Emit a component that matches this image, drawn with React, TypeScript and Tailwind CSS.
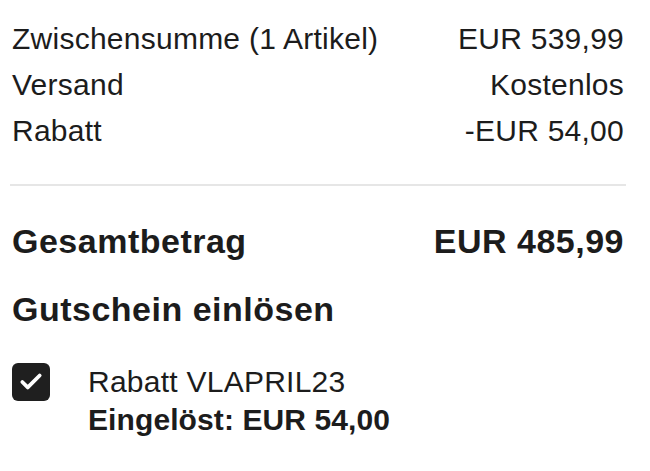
import { Check } from 'lucide-react'

const ROWS = [
  { label: 'Zwischensumme (1 Artikel)', value: 'EUR 539,99' },
  { label: 'Versand', value: 'Kostenlos' },
  { label: 'Rabatt', value: '-EUR 54,00' },
]

export default function App() {
  return (
    <div className="w-[650px] h-[471px] bg-white text-[#1c1c1c] font-[family-name:'Liberation_Sans',Arial,sans-serif]">
      <div className="ml-[10px] w-[616px] pt-[16px]">
        {ROWS.map((row) => (
          <div key={row.label} className="flex justify-between px-[2px] text-[30px] leading-[46px] tracking-[0.25px]">
            <span>{row.label}</span>
            <span>{row.value}</span>
          </div>
        ))}

        <div className="mt-[30px] h-[2px] bg-[#e6e6e6]" />

        <div className="mt-[35px] flex justify-between px-[2px] text-[34px] leading-[40px] font-bold tracking-[0.5px]">
          <span>Gesamtbetrag</span>
          <span>EUR 485,99</span>
        </div>

        <h2 className="mt-[28px] px-[2px] text-[34px] leading-[40px] font-bold tracking-[0.5px]">
          Gutschein einlösen
        </h2>

        <div className="mt-[34px] flex gap-[38px] px-[2px]">
          <div className="flex h-[38px] w-[38px] shrink-0 items-center justify-center rounded-[6px] bg-[#1f1f1f]">
            <Check className="h-[26px] w-[26px] text-white" strokeWidth={3.5} />
          </div>
          <div className="text-[30px] leading-[38px]">
            <div className="tracking-[0.25px]">Rabatt VLAPRIL23</div>
            <div className="font-bold tracking-[0.1px]">Eingelöst: EUR 54,00</div>
          </div>
        </div>
      </div>
    </div>
  )
}
